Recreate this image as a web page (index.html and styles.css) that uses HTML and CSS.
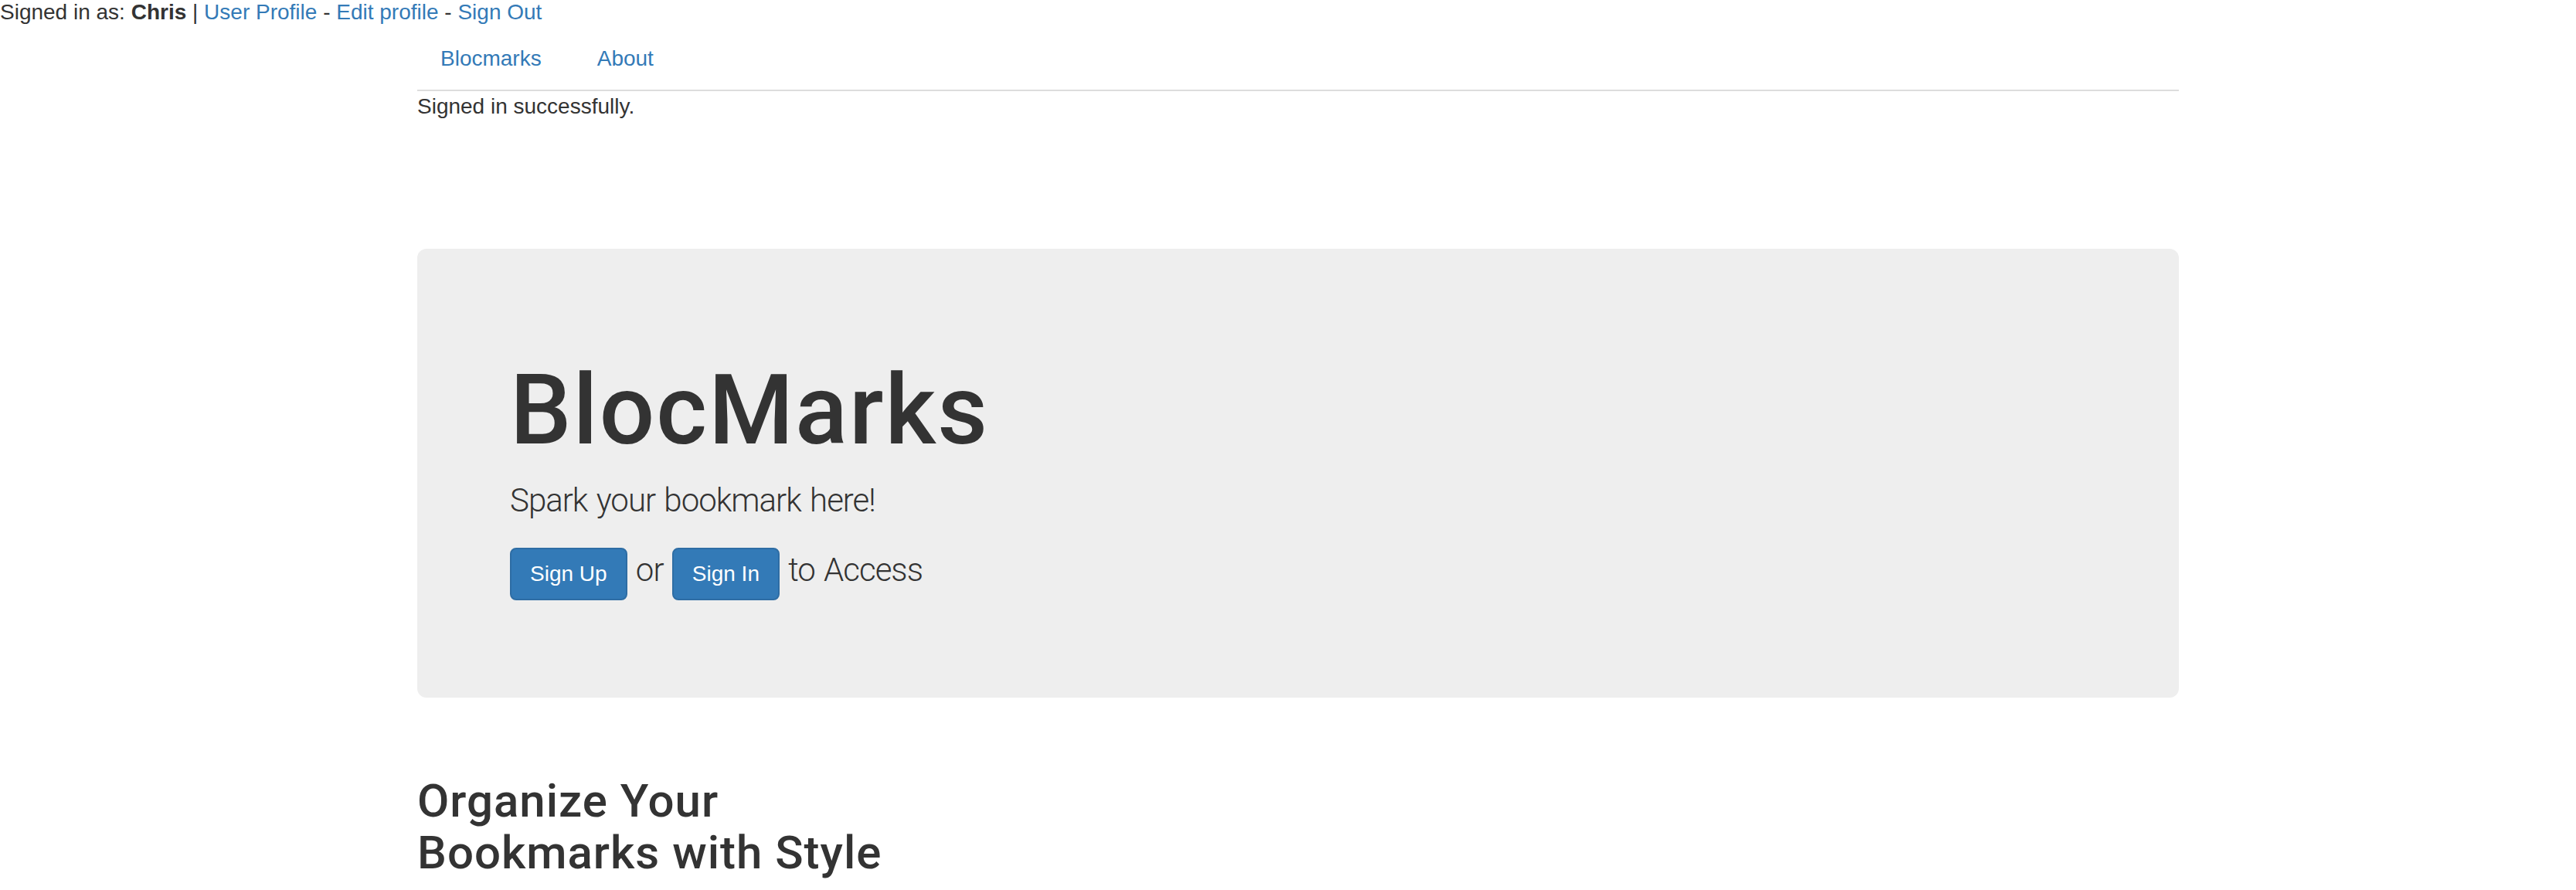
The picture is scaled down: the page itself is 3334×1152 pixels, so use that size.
FILE: index.html
```html
<!DOCTYPE html>
<html>
<head>
<meta charset="utf-8">
<title>BlocMarks</title>
<link rel="stylesheet" href="styles.css">
</head>
<body>
<div class="userbar">Signed in as: <strong>Chris</strong> | <a href="#">User Profile</a> - <a href="#">Edit profile</a> - <a href="#">Sign Out</a></div>
<div class="container">
  <ul class="nav">
    <li><a href="#">Blocmarks</a></li>
    <li><a href="#">About</a></li>
  </ul>
  <div class="flash">Signed in successfully.</div>
  <div class="jumbotron">
    <h1 class="title">BlocMarks</h1>
    <p class="lead">Spark your bookmark here!</p>
    <p class="lead"><a class="btn" href="#">Sign Up</a> or <a class="btn" href="#">Sign In</a> to Access</p>
  </div>
  <div class="row">
    <div class="col">
      <h2 class="subtitle">Organize Your Bookmarks with Style</h2>
    </div>
  </div>
</div>
</body>
</html>
```
FILE: styles.css
```css
html, body {
  margin: 0;
  padding: 0;
  background: #fff;
}
body {
  font-family: "Liberation Sans", Arial, sans-serif;
  font-size: 28px;
  color: #333;
}
a {
  color: #337ab7;
  text-decoration: none;
}
.userbar {
  line-height: 32px;
  white-space: nowrap;
}
.container {
  margin-left: 540px;
  width: 2280px;
}
.nav {
  list-style: none;
  margin: 4px 0 0 0;
  padding: 0;
  display: flex;
  gap: 12px;
  border-bottom: 2px solid #ddd;
}
.nav a {
  display: block;
  padding: 20px 30px;
  line-height: 40px;
}
.flash {
  line-height: 40px;
}
.jumbotron {
  margin-top: 164px;
  background: #eee;
  border-radius: 12px;
  padding: 140px 120px 96px 120px;
}
.title {
  margin: 0 0 18px 0;
  font-family: Roboto, "Liberation Sans", sans-serif;
  font-weight: 500;
  font-size: 126px;
  line-height: 138px;
  letter-spacing: 2px;
  color: #333;
}
.lead {
  margin: 0 0 30px 0;
  font-family: Roboto, "Liberation Sans", sans-serif;
  font-weight: 300;
  font-size: 42px;
  line-height: 60px;
  letter-spacing: -1px;
  word-spacing: 2px;
}
.btn {
  display: inline-block;
  font-family: "Liberation Sans", Arial, sans-serif;
  font-size: 28px;
  line-height: 40px;
  font-weight: 400;
  letter-spacing: 0;
  word-spacing: 0;
  padding: 12px 24px;
  border: 2px solid #2e6da4;
  border-radius: 8px;
  background: #337ab7;
  color: #fff;
}
.row {
  display: flex;
}
.col {
  width: 660px;
}
.subtitle {
  margin: 100px 0 0 0;
  font-family: Roboto, "Liberation Sans", sans-serif;
  font-weight: 500;
  font-size: 60px;
  line-height: 67px;
  letter-spacing: 1px;
  color: #333;
}
```
